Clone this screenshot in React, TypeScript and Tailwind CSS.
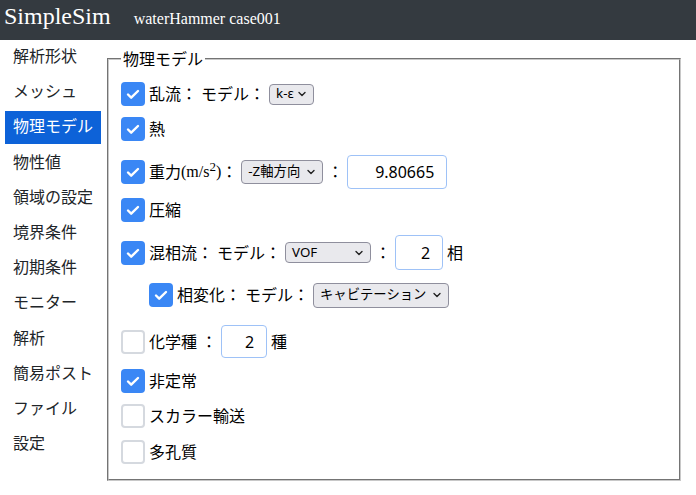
import React from "react";

const FONT = { fontFamily: '"Noto Sans", "Noto Sans CJK JP", sans-serif' };

function Check({ checked }: { checked: boolean }) {
  if (checked) {
    return (
      <span className="flex h-[24px] w-[24px] shrink-0 items-center justify-center rounded-[4px] bg-[#3a87f5]">
        <svg width="24" height="24" viewBox="0 0 24 24" fill="none">
          <path d="M7 12.5l3.2 3.2L17 9" stroke="white" strokeWidth="2.4" strokeLinecap="round" strokeLinejoin="round" />
        </svg>
      </span>
    );
  }
  return <span className="block h-[24px] w-[24px] shrink-0 rounded-[4px] border-2 border-[#d5d9df] bg-white" />;
}

function Chevron() {
  return (
    <svg width="8" height="6" viewBox="0 0 8 6" fill="none">
      <path d="M1 1.5l3 3 3-3" stroke="#222" strokeWidth="1.4" strokeLinecap="round" strokeLinejoin="round" />
    </svg>
  );
}

function Sel({ label, w, h }: { label: string; w: string; h: string }) {
  return (
    <span
      className={`ml-1 flex ${w} ${h} shrink-0 items-center justify-between rounded-[4px] border border-[#8f8f9d] bg-[#e9e9ed] pl-[6px] pr-[7px] text-[13.33px] leading-none text-black`}
    >
      <span>{label}</span>
      <Chevron />
    </span>
  );
}

function Num({ value, w, h }: { value: string; w: string; h: string }) {
  return (
    <span
      className={`ml-1 flex ${w} ${h} shrink-0 items-center justify-end rounded-[4px] border border-[#9ec2f7] bg-white pr-[12px] text-[16px] text-black`}
    >
      {value}
    </span>
  );
}

const nav = ["解析形状", "メッシュ", "物理モデル", "物性値", "領域の設定", "境界条件", "初期条件", "モニター", "解析", "簡易ポスト", "ファイル", "設定"];

export default function App() {
  return (
    <div className="h-[495px] w-[696px] overflow-hidden bg-white text-[16px] text-[#212529]" style={FONT}>
      <header className="flex h-[40px] items-start bg-[#343a40] pl-[4px] pt-[2px] text-white" style={{ fontFamily: '"Liberation Serif", serif' }}>
        <span className="text-[24px] leading-[28px]">SimpleSim</span>
        <span className="ml-[23px] mt-[7px] text-[16px] leading-[20px]">waterHammer case001</span>
      </header>
      <div className="flex">
        <nav className="flex w-[107px] shrink-0 flex-col gap-[2.2px] pl-[5px] pr-[6px] pt-[1px]">
          {nav.map((n) => (
            <div
              key={n}
              className={`h-[33px] pl-2 leading-[31px] ${n === "物理モデル" ? "bg-[#0d62d8] text-white" : "text-[#212529]"}`}
            >
              {n}
            </div>
          ))}
        </nav>
        <fieldset className="mr-[15px] mt-[7px] h-[434px] flex-1 border-2 border-[#c8c8c8] px-3 pb-4 text-black [border-style:groove]">
          <legend className="px-0.5 leading-[24px]">物理モデル</legend>
          <div className="flex flex-col">
            <div className="mt-[11px] flex h-[24px] items-center">
              <Check checked />
              <span className="ml-1">乱流：</span>
              <span className="ml-1">モデル：</span>
              <Sel label="k-ε" w="w-[45px]" h="h-[21px]" />
            </div>
            <div className="mt-[10.5px] flex h-[24px] items-center">
              <Check checked />
              <span className="ml-1">熱</span>
            </div>
            <div className="mt-[14px] flex h-[35px] items-center">
              <Check checked />
              <span className="ml-1">重力</span>
              <span style={{ fontFamily: '"Liberation Serif", serif' }}>
                (m/s<sup className="text-[13px]">2</sup>)
              </span>
              <span>：</span>
              <Sel label="-Z軸方向" w="w-[82px]" h="h-[24px]" />
              <span className="ml-1">：</span>
              <Num value="9.80665" w="w-[100px]" h="h-[34px]" />
            </div>
            <div className="mt-[8.5px] flex h-[24px] items-center">
              <Check checked />
              <span className="ml-1">圧縮</span>
            </div>
            <div className="mt-[13px] flex h-[35px] items-center">
              <Check checked />
              <span className="ml-1">混相流：</span>
              <span className="ml-1">モデル：</span>
              <Sel label="VOF" w="w-[86px]" h="h-[21px]" />
              <span className="ml-1">：</span>
              <Num value="2" w="w-[48px]" h="h-[35px]" />
              <span className="ml-1">相</span>
            </div>
            <div className="mt-[12.5px] flex h-[25px] items-center pl-[28px]">
              <Check checked />
              <span className="ml-1">相変化：</span>
              <span className="ml-1">モデル：</span>
              <Sel label="キャビテーション" w="w-[136px]" h="h-[25px]" />
            </div>
            <div className="mt-[17.5px] flex h-[33px] items-center">
              <Check checked={false} />
              <span className="ml-1">化学種</span>
              <span className="ml-1">：</span>
              <Num value="2" w="w-[46px]" h="h-[33px]" />
              <span className="ml-1">種</span>
            </div>
            <div className="mt-[11px] flex h-[24px] items-center">
              <Check checked />
              <span className="ml-1">非定常</span>
            </div>
            <div className="mt-[11px] flex h-[24px] items-center">
              <Check checked={false} />
              <span className="ml-1">スカラー輸送</span>
            </div>
            <div className="mt-[11.5px] flex h-[24px] items-center">
              <Check checked={false} />
              <span className="ml-1">多孔質</span>
            </div>
          </div>
        </fieldset>
      </div>
    </div>
  );
}
